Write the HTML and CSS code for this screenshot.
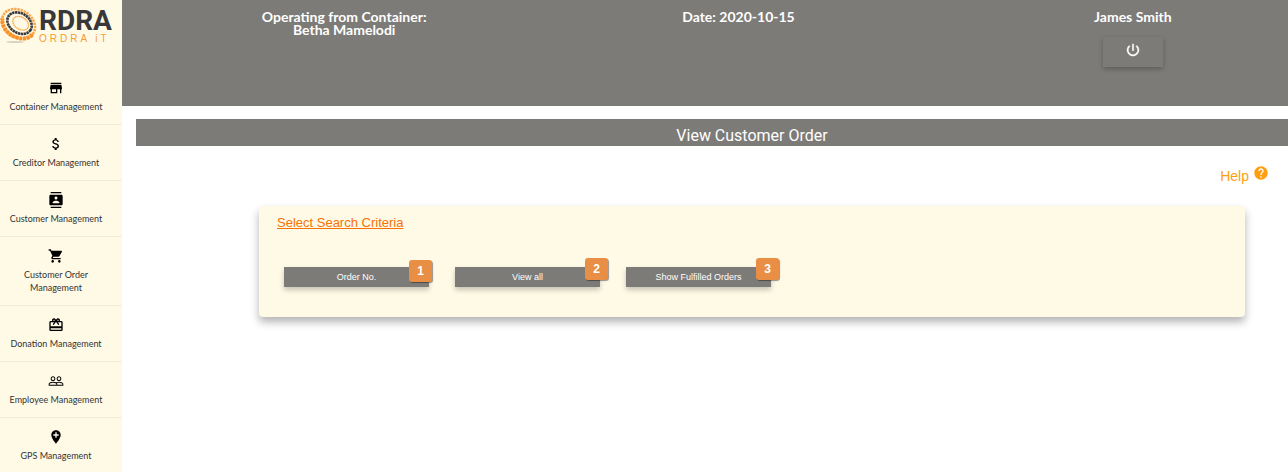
FILE: index.html
```html
<!DOCTYPE html>
<html lang="en">
<head>
<meta charset="utf-8">
<title>View Customer Order</title>
<link rel="stylesheet" href="styles.css">
</head>
<body>
<div class="app">
  <aside class="sidebar">
    <a class="logo" href="#" aria-label="ORDRA IT home">
      <svg class="logo-mark" viewBox="0 0 38 36" aria-hidden="true">
        <ellipse cx="15" cy="34" rx="9" ry="1" fill="#d8d2bf"/>
        <g fill="none" transform="rotate(32 19 16)">
          <ellipse cx="18.500" cy="16" rx="17.500" ry="13.500" stroke="#f9a84c" stroke-width="2.600" stroke-dasharray="2.400 .8"/>
          <path d="M36 18A17.500 13.500 0 0 1 2 20" stroke="#f7922a" stroke-width="4" stroke-dasharray="3 .7"/>
          <ellipse cx="19" cy="15" rx="13" ry="9.800" stroke="#39393b" stroke-width="2.600" stroke-dasharray="2.400 .5"/>
          <ellipse cx="20" cy="14.500" rx="8.500" ry="6" stroke="#f9a84c" stroke-width="1.300" stroke-dasharray="1.500 .4"/>
        </g>
      </svg>
      <span class="logo-text">
        <span class="logo-name">RDRA</span>
        <span class="logo-sub">ORDRA iT</span>
      </span>
    </a>
    <nav class="menu">
      <a class="item" href="#"><svg viewBox="0 0 24 24"><path d="M20 4H4v2h16V4zm1 10v-2l-1-5H4l-1 5v2h1v6h10v-6h4v6h2v-6h1zm-9 4H6v-4h6v4z"/></svg><span>Container Management</span></a>
      <a class="item" href="#"><svg viewBox="0 0 24 24"><path d="M11.8 10.9c-2.27-.59-3-1.2-3-2.15 0-1.09 1.01-1.85 2.7-1.85 1.78 0 2.44.85 2.5 2.1h2.21c-.07-1.72-1.12-3.3-3.21-3.81V3h-3v2.16c-1.94.42-3.5 1.68-3.5 3.61 0 2.31 1.91 3.46 4.7 4.13 2.5.6 3 1.48 3 2.41 0 .69-.49 1.79-2.7 1.79-2.06 0-2.87-.92-2.98-2.1h-2.2c.12 2.19 1.76 3.42 3.68 3.83V21h3v-2.15c1.95-.37 3.5-1.5 3.5-3.55 0-2.84-2.43-3.81-4.7-4.4z"/></svg><span>Creditor Management</span></a>
      <a class="item" href="#"><svg viewBox="0 0 24 24"><path d="M20 0H4v2h16V0zM4 24h16v-2H4v2zM20 4H4c-1.1 0-2 .9-2 2v12c0 1.1.9 2 2 2h16c1.1 0 2-.9 2-2V6c0-1.1-.9-2-2-2zm-8 2.75c1.24 0 2.25 1.01 2.25 2.25s-1.01 2.25-2.25 2.25S9.75 10.240 9.75 9 10.760 6.750 12 6.750zM17 17H7v-1.500c0-1.670 3.330-2.500 5-2.500s5 .83 5 2.500V17z"/></svg><span>Customer Management</span></a>
      <a class="item" href="#"><svg viewBox="0 0 24 24"><path d="M7 18c-1.100 0-1.990.9-1.990 2S5.900 22 7 22s2-.9 2-2-.9-2-2-2zM1 2v2h2l3.600 7.590-1.350 2.450c-.16.28-.25.61-.25.96 0 1.100.9 2 2 2h12v-2H7.420c-.14 0-.25-.11-.25-.25l.03-.12.9-1.630h7.450c.75 0 1.410-.41 1.750-1.030l3.580-6.490c.08-.14.12-.31.12-.48 0-.55-.45-1-1-1H5.210l-.94-2H1zm16 16c-1.100 0-1.990.9-1.990 2s.89 2 1.990 2 2-.9 2-2-.9-2-2-2z"/></svg><span>Customer Order Management</span></a>
      <a class="item" href="#"><svg viewBox="0 0 24 24"><path d="M20 6h-2.180c.11-.31.18-.65.18-1 0-1.660-1.340-3-3-3-1.050 0-1.960.54-2.500 1.350l-.5.67-.5-.68C10.960 2.540 10.050 2 9 2 7.340 2 6 3.340 6 5c0 .35.07.69.18 1H4c-1.110 0-1.990.89-1.990 2L2 19c0 1.110.89 2 2 2h16c1.110 0 2-.89 2-2V8c0-1.110-.89-2-2-2zm-5-2c.55 0 1 .45 1 1s-.45 1-1 1-1-.45-1-1 .45-1 1-1zM9 4c.55 0 1 .45 1 1s-.45 1-1 1-1-.45-1-1 .45-1 1-1zm11 15H4v-2h16v2zm0-5H4V8h5.080L7 10.830 8.620 12 11 8.760l1-1.360 1 1.360L15.380 12 17 10.830 14.920 8H20v6z"/></svg><span>Donation Management</span></a>
      <a class="item" href="#"><svg viewBox="0 0 24 24"><path d="M16.500 13c-1.200 0-3.070.34-4.500 1-1.430-.67-3.300-1-4.500-1C5.330 13 1 14.080 1 16.250V19h22v-2.750c0-2.170-4.330-3.250-6.500-3.250zm-4 4.500h-10v-1.250c0-.54 2.560-1.750 5-1.750s5 1.210 5 1.750v1.250zm9 0H14v-1.250c0-.46-.2-.86-.52-1.220.88-.3 1.960-.53 3.020-.53 2.440 0 5 1.210 5 1.750v1.250zM7.500 12c1.930 0 3.500-1.570 3.500-3.500S9.430 5 7.500 5 4 6.570 4 8.500 5.570 12 7.500 12zm0-5.500c1.100 0 2 .9 2 2s-.9 2-2 2-2-.9-2-2 .9-2 2-2zm9 5.500c1.930 0 3.500-1.570 3.500-3.500S18.430 5 16.500 5 13 6.570 13 8.500s1.570 3.500 3.500 3.500zm0-5.500c1.100 0 2 .9 2 2s-.9 2-2 2-2-.9-2-2 .9-2 2-2z"/></svg><span>Employee Management</span></a>
      <a class="item" href="#"><svg viewBox="0 0 24 24"><path d="M12 2C8.140 2 5 5.140 5 9c0 5.250 7 13 7 13s7-7.750 7-13c0-3.860-3.140-7-7-7zm4 8h-3v3h-2v-3H8V8h3V5h2v3h3v2z"/></svg><span>GPS Management</span></a>
    </nav>
  </aside>
  <div class="content">
    <header class="topbar">
      <div class="info">Operating from Container: Betha Mamelodi</div>
      <div class="info">Date: 2020-10-15</div>
      <div class="info">James Smith
        <button class="power" type="button" aria-label="Log out"><svg viewBox="0 0 24 24"><path d="M13 3h-2v10h2V3zm4.830 2.170l-1.420 1.420C17.990 7.860 19 9.810 19 12c0 3.870-3.130 7-7 7s-7-3.130-7-7c0-2.190 1.010-4.140 2.580-5.420L6.170 5.170C4.230 6.820 3 9.260 3 12c0 4.970 4.030 9 9 9s9-4.030 9-9c0-2.740-1.230-5.180-3.170-6.830z"/></svg></button>
      </div>
    </header>
    <main>
      <h1 class="title">View Customer Order</h1>
      <a class="help" href="#"><span>Help</span><svg viewBox="0 0 24 24" aria-hidden="true"><path d="M12 2C6.480 2 2 6.480 2 12s4.480 10 10 10 10-4.480 10-10S17.520 2 12 2zm1 17h-2v-2h2v2zm2.070-7.750l-.9.92C13.450 12.900 13 13.500 13 15h-2v-.5c0-1.100.45-2.100 1.170-2.830l1.240-1.260c.37-.36.59-.86.59-1.410 0-1.100-.9-2-2-2s-2 .9-2 2H8c0-2.210 1.790-4 4-4s4 1.790 4 4c0 .88-.36 1.680-.93 2.250z"/></svg></a>
      <section class="card">
        <h2 class="card-title">Select Search Criteria</h2>
        <div class="actions">
          <div class="action"><button type="button">Order No.</button><span class="badge badge-first">1</span></div>
          <div class="action"><button type="button">View all</button><span class="badge">2</span></div>
          <div class="action"><button type="button">Show Fulfilled Orders</button><span class="badge">3</span></div>
        </div>
      </section>
    </main>
  </div>
</div>
</body>
</html>
```
FILE: styles.css
```css
* { box-sizing: border-box; }
body { margin: 0; background: #fff; font-family: "Liberation Sans", Arial, sans-serif; }
.app { display: flex; height: 100vh; overflow: hidden; }

.sidebar { flex: 0 0 122px; overflow: hidden; background: #fffae6; }
.logo { display: flex; height: 69px; padding-top: 8px; gap: 1px; text-decoration: none; }
.logo-mark { width: 38px; height: 36px; flex: none; overflow: visible; }
.logo-text { display: flex; flex-direction: column; }
.logo-name { font: 700 28px/26px Roboto, sans-serif; color: #38383a; }
.logo-sub { font: 10px/10px "Liberation Sans", Arial, sans-serif; letter-spacing: 3px; color: #f79a32; white-space: nowrap; }

.menu { display: flex; flex-direction: column; }
.item { display: flex; flex-direction: column; align-items: center; gap: 4px; padding: 11px 20px 11px 10px; border-bottom: 1px solid #f3ecd9; color: #333; font: 9px/13px Lato, sans-serif; text-align: center; text-decoration: none; }
.item span { margin: 0 -10px; max-width: 96px; }
.item svg { width: 16px; height: 16px; fill: #000; }

.content { flex: 1; min-width: 0; }
.topbar { display: grid; grid-template-columns: repeat(3, 1fr); gap: 134px; height: 106px; padding: 10px 25px 0 92px; background: #7d7b77; }
.info { display: flex; flex-direction: column; align-items: center; justify-self: center; max-width: 180px; color: #fff; font: bold 14px/13px Lato, sans-serif; text-align: center; }
.power { display: flex; align-items: center; justify-content: center; width: 60px; height: 30px; margin-top: 14px; padding: 0; border: 0; background: #7d7b77; box-shadow: 0 2px 5px rgba(0, 0, 0, .25); }
.power svg { width: 16px; height: 16px; margin-bottom: 4px; fill: #fff; stroke: #fff; stroke-width: .6; }

.title { margin: 13px 0 0 14px; padding: 6px 0 0 80px; background: #7d7b77; color: #fff; font: 16px/21px Roboto, sans-serif; text-align: center; }
.help { display: flex; justify-content: flex-end; gap: 4px; margin: 19px 19px 0 auto; width: max-content; color: #ff9f0f; font-size: 14px; line-height: 22px; text-decoration: none; }
.help svg { width: 16px; height: 16px; fill: #ff9f0f; }

.card { margin: 19px 43px 0 137px; padding: 8px 18px 30px; background: #fffae6; border-radius: 4px; box-shadow: 0 5px 9px rgba(0, 0, 0, .3); }
.card-title { margin: 0; color: #f57306; font-size: 13px; line-height: 18px; font-weight: 400; text-decoration: underline; }
.actions { display: flex; gap: 26px; padding: 35px 7px 0; }
.action { position: relative; width: 145px; }
.action button { display: block; width: 100%; height: 20px; padding: 0; border: 0; background: #7d7b77; color: #fff; font: 9px/20px "Liberation Sans", Arial, sans-serif; box-shadow: 0 3px 5px rgba(0, 0, 0, .22); }
.badge { position: absolute; top: -9px; right: -8px; width: 23px; height: 22px; border-radius: 3px; background: #e88f45; color: #fff; font: bold 12px/22px "Liberation Sans", Arial, sans-serif; text-align: center; box-shadow: 1px 1px 1px rgba(0, 0, 0, .4); }
.badge-first { top: -7px; right: -3px; }
```
